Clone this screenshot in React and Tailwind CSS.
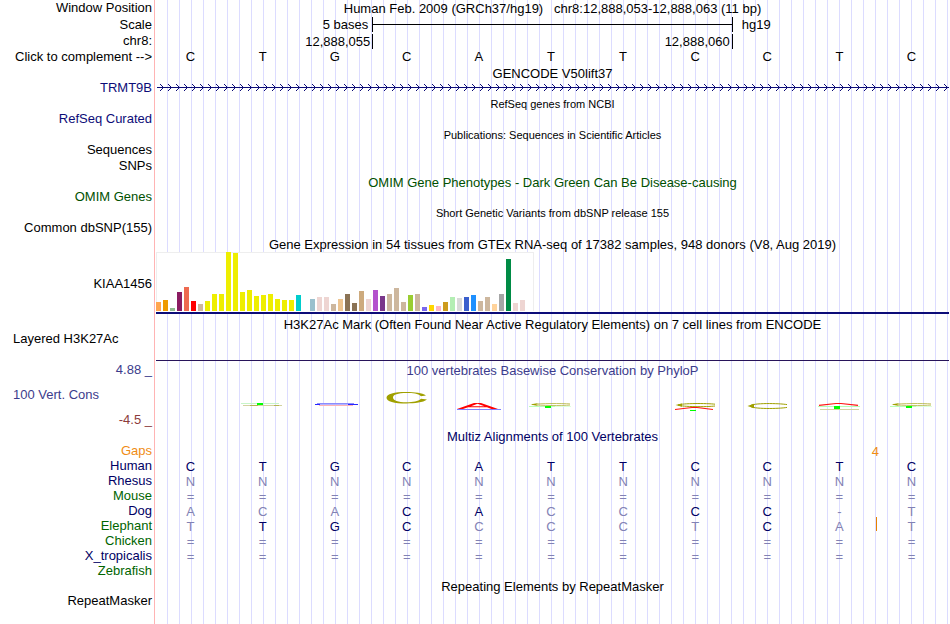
import clsx from "clsx";

const tissues = [
  ["#ffa54f", 9], ["#ee9a00", 11], ["#8fbc8f", 3], ["#8b1c62", 19], ["#ee6a50", 24],
  ["#ff0000", 10], ["#cdb79e", 7], ["#eeee00", 10], ["#eeee00", 17], ["#eeee00", 17],
  ["#eeee00", 59], ["#eeee00", 58], ["#eeee00", 19], ["#eeee00", 21], ["#eeee00", 15],
  ["#eeee00", 16], ["#eeee00", 17], ["#eeee00", 12], ["#eeee00", 11], ["#eeee00", 11],
  ["#00cdcd", 16], ["#ee82ee", 0], ["#9ac0cd", 12], ["#eed5d2", 14], ["#eed5d2", 14],
  ["#cdb79e", 7], ["#eec591", 12], ["#8b7355", 17], ["#8b7355", 8], ["#cdaa7d", 20],
  ["#eed5d2", 12], ["#b452cd", 21], ["#7a378b", 15], ["#cdb79e", 17], ["#cdb79e", 23],
  ["#cdb79e", 9], ["#9acd32", 16], ["#cdb79e", 17], ["#7a67ee", 4], ["#ffd700", 6],
  ["#ffb6c1", 5], ["#cd9b1d", 9], ["#b4eeb4", 14], ["#d9d9d9", 13], ["#3a5fcd", 14],
  ["#1e90ff", 16], ["#cdb79e", 10], ["#cdb79e", 14], ["#ffd39b", 7], ["#a6a6a6", 17],
  ["#008b45", 52], ["#eed5d2", 8], ["#eed5d2", 11],
];

const species = [
  { name: "Human", color: "text-[#000064]", bases: "CTGCATTCCTC", match: "11111111111" },
  { name: "Rhesus", color: "text-[#000064]", bases: "NNNNNNNNNNN", match: "00000000000" },
  { name: "Mouse", color: "text-[#006400]", bases: "===========", match: "00000000000" },
  { name: "Dog", color: "text-[#000064]", bases: "ACACACCCC-T", match: "00011001100" },
  { name: "Elephant", color: "text-[#006400]", bases: "TTGCCCCTCAT", match: "01110000100" },
  { name: "Chicken", color: "text-[#006400]", bases: "===========", match: "00000000000" },
  { name: "X_tropicalis", color: "text-[#000064]", bases: "===========", match: "00000000000" },
  { name: "Zebrafish", color: "text-[#006400]", bases: "", match: "" },
];

function Row({ label, height = "h-[15px]", color = "text-black", align = "text-right", children }) {
  return (
    <div className={clsx("flex items-center", height)}>
      <div className={clsx("w-[154px] shrink-0 whitespace-pre pr-[2px] pb-[2px] pl-[13px]", align, color)}>{label}</div>
      <div className="ml-[2px] mr-px h-full min-w-0 flex-1">{children}</div>
    </div>
  );
}

function Title({ label, height = "h-4", labelColor, color = "text-black", small, children }) {
  return (
    <Row label={label} height={height} color={labelColor}>
      <h2 className={clsx("flex h-full items-center justify-center whitespace-pre", color, small && "text-[11px]")}>
        {children}
      </h2>
    </Row>
  );
}

function Bases({ bases, match }) {
  return (
    <div className="grid h-full grid-cols-11 items-center pb-[2px] text-center">
      {bases.split("").map((base, i) => (
        <span
          key={i}
          className={clsx("pr-[3px]", !match ? "text-black" : match[i] === "1" ? "text-[#000064]" : "text-[#8282b4]")}
        >
          {base}
        </span>
      ))}
    </div>
  );
}

function GeneLine() {
  return (
    <svg className="block h-full w-full text-[#0c0c78]" shapeRendering="crispEdges">
      <defs>
        <pattern id="strand" width="8" height="15" patternUnits="userSpaceOnUse">
          <path d="M4 3h1v1h-1zM5 4h1v1h-1zM6 5h1v1h-1zM6 7h1v1h-1zM5 8h1v1h-1zM4 9h1v1h-1z" fill="currentColor" />
        </pattern>
      </defs>
      <rect x="1" width="100%" height="15" fill="url(#strand)" />
      <rect x="1" y="6" width="100%" height="1" fill="currentColor" />
    </svg>
  );
}

function Expression() {
  return (
    <div className="w-[378px] bg-white pb-px">
      <div className="flex h-[59px] items-end border border-b-0 border-[#eeeeee]">
        <div className="-ml-px flex items-end gap-[2px]">
          {tissues.map(([color, height], i) => (
            <span key={i} className="w-[5px]" style={{ height, backgroundColor: color }} />
          ))}
        </div>
      </div>
    </div>
  );
}

// One cell per base; each drawing is in the cell's own 72x33 space, top at the track's top.
const olive = "#a0a000";
const shallowC = (
  <>
    <path d="M54 24.900C46 24.300 24 24.300 16 25.500C24 26.700 46 26.700 54 26.100" stroke="#b4b43c" strokeWidth="0.800" fill="none" />
    <path d="M14.500 25.500L22 24.300L20 25.500L22 26.700z" fill={olive} />
    <path d="M13 27.500h26" stroke="#b8ffb8" />
    <path d="M39 27.500h16" stroke="#dcffdc" />
    <path d="M29 27h6v2h-6z" fill="#00ff00" />
  </>
);

const logos = [
  null,
  <>
    <path d="M13 24.500h38" stroke="#c8f5c8" />
    <path d="M15 26.500h39" stroke="#d2d2a0" />
    <path d="M22 26.500h8M46 26.500h5" stroke="#b4b450" />
    <path d="M29 24h6v2h-6z" fill="#00ff00" />
  </>,
  <>
    <path d="M17 24.500h37" stroke="#8c8cff" />
    <path d="M15 25.500h40" stroke="#b4b4ff" />
    <path d="M15 25.500h5M48 25.500h10" stroke="#2828ff" />
    <path d="M19 26.500h34" stroke="#ffb4b4" />
  </>,
  <path
    d="M54 16.500L49 17.300C46 14.500 41 14 34.500 14C26 14 21 15.500 21 18.500C21 21.500 26 23.300 34.500 23.300C41 23.300 46 22.500 49 19.800L55 20.600C51 23.600 43 24.500 34.500 24.500C22 24.500 14.500 22.500 14.500 18.700C14.500 15 22 13 34.500 13C43 13 50 13.800 54 16.500Z"
    fill={olive}
  />,
  <>
    <path d="M13 30L30 24h7L54 30h-6.500L43 28.200H24L19 30zM27 27.200h13.500L33.500 24.800z" fill="#ff0000" fillRule="evenodd" />
    <path d="M13 30.500h44" stroke="#8080ff" />
  </>,
  shallowC,
  null,
  <>
    <path d="M54 25.200C46 24.200 21 24.200 17 26C21 28 46 28 54 27" stroke={olive} fill="none" />
    <path d="M14.500 26L21 24.500V27.800z" fill={olive} />
    <path d="M14 30.500L31 28.500h5L52 30.500" stroke="#ff1414" strokeWidth="1.200" fill="none" />
    <path d="M29 31h6v1h-6z" fill="#00ff00" />
  </>,
  <>
    <path d="M54 25.600C46 24.200 19 23.800 17 27C19 30.200 46 29.900 54 28.400" stroke={olive} fill="none" />
    <path d="M14.500 27L21 24.800V29.200z" fill={olive} />
  </>,
  <>
    <path d="M14 26.300L31 24.500h5L53 26.300" stroke="#ff1414" strokeWidth="1.200" fill="none" />
    <path d="M13 27.500h42" stroke="#b4ffb4" />
    <path d="M29 27h6v3h-6z" fill="#00ff00" />
    <path d="M15 30.500h39" stroke="#d2d2a0" />
  </>,
  shallowC,
];

function Conservation() {
  return (
    <div className="grid h-full grid-cols-11 pt-px">
      {logos.map((logo, i) => (
        <svg key={i} viewBox="0 0 72 33" className="h-[33px] w-[72px]">
          {logo}
        </svg>
      ))}
    </div>
  );
}

export default function App() {
  return (
    <main className="relative min-h-screen bg-white font-['Liberation_Sans',Arial,sans-serif] text-[13px] leading-[15px] text-black">
      <div className="absolute inset-y-0 left-[154px] w-px bg-[#ffb4b4]" />
      <div className="absolute inset-y-0 right-px left-[156px] bg-[repeating-linear-gradient(to_right,transparent_0_11px,#dcdcff_11px_12px)]" />

      <div className="relative">
        <Title label="Window Position" height="h-[17px]">
          {"Human Feb. 2009 (GRCh37/hg19)   chr8:12,888,053-12,888,063 (11 bp)"}
        </Title>
        <Row label="Scale" height="h-[17px]">
          <div className="grid h-[15px] grid-cols-11 items-center">
            <span className="col-span-3 pr-1 text-right">5 bases</span>
            <span className="col-span-5 flex h-full items-center border-x border-black">
              <span className="h-px w-full bg-black" />
            </span>
            <span className="col-span-3 pl-[9px]">hg19</span>
          </div>
        </Row>
        <Row label="chr8:">
          <div className="grid h-full grid-cols-11 items-center">
            <span className="col-span-3 pr-[2px] text-right">12,888,055</span>
            <span className="col-span-5 h-full border-x border-black pr-[2px] text-right">12,888,060</span>
          </div>
        </Row>
        <Row label="Click to complement -->" height="h-4">
          <Bases bases="CTGCATTCCTC" />
        </Row>

        <Title>GENCODE V50lift37</Title>
        <Row label="TRMT9B" color="text-[#0c0c78]">
          <GeneLine />
        </Row>
        <Title small>RefSeq genes from NCBI</Title>
        <Row label="RefSeq Curated" color="text-[#0c0c78]" />
        <Title small>Publications: Sequences in Scientific Articles</Title>
        <Row label="Sequences" />
        <Row label="SNPs" height="h-4" />
        <Title color="text-[#005000]">OMIM Gene Phenotypes - Dark Green Can Be Disease-causing</Title>
        <Row label="OMIM Genes" color="text-[#005000]" />
        <Title small>Short Genetic Variants from dbSNP release 155</Title>
        <Row label="Common dbSNP(155)" />

        <Title>Gene Expression in 54 tissues from GTEx RNA-seq of 17382 samples, 948 donors (V8, Aug 2019)</Title>
        <Row label="KIAA1456" height="h-16">
          <div className="h-[62px] border-b-2 border-[#0c0c78]">
            <Expression />
          </div>
        </Row>

        <Title>H3K27Ac Mark (Often Found Near Active Regulatory Elements) on 7 cell lines from ENCODE</Title>
        <Row label="Layered H3K27Ac" align="text-left" />
        <Row>
          <div className="h-[14px] border-b border-[#28145a]" />
        </Row>

        <Title label="4.88 _" labelColor="text-[#3c3c8c]" color="text-[#3c3c8c]">
          100 vertebrates Basewise Conservation by PhyloP
        </Title>
        <Row label="100 Vert. Cons" height="h-[34px]" align="text-left" color="text-[#3c3c8c]">
          <Conservation />
        </Row>
        <Row label="-4.5 _" height="h-[17px]" color="text-[#8c3c3c]" />

        <Title height="h-[15px]" color="text-[#000064]">Multiz Alignments of 100 Vertebrates</Title>
        <Row label="Gaps" color="text-[#f08c14]">
          <div className="grid grid-cols-11 text-[#f08c14]">
            <span className="col-span-2 col-start-10 pr-[3px] text-center">4</span>
          </div>
        </Row>
        {species.map((s) => (
          <Row key={s.name} label={s.name} color={s.color}>
            {s.name === "Elephant" ? (
              <div className="relative h-full">
                <Bases bases={s.bases} match={s.match} />
                <span className="absolute -top-[2px] left-10/11 -ml-px h-[14px] w-px bg-[#e68200]" />
              </div>
            ) : (
              <Bases bases={s.bases} match={s.match} />
            )}
          </Row>
        ))}

        <Title height="h-[15px]">Repeating Elements by RepeatMasker</Title>
        <Row label="RepeatMasker" />
      </div>
    </main>
  );
}
